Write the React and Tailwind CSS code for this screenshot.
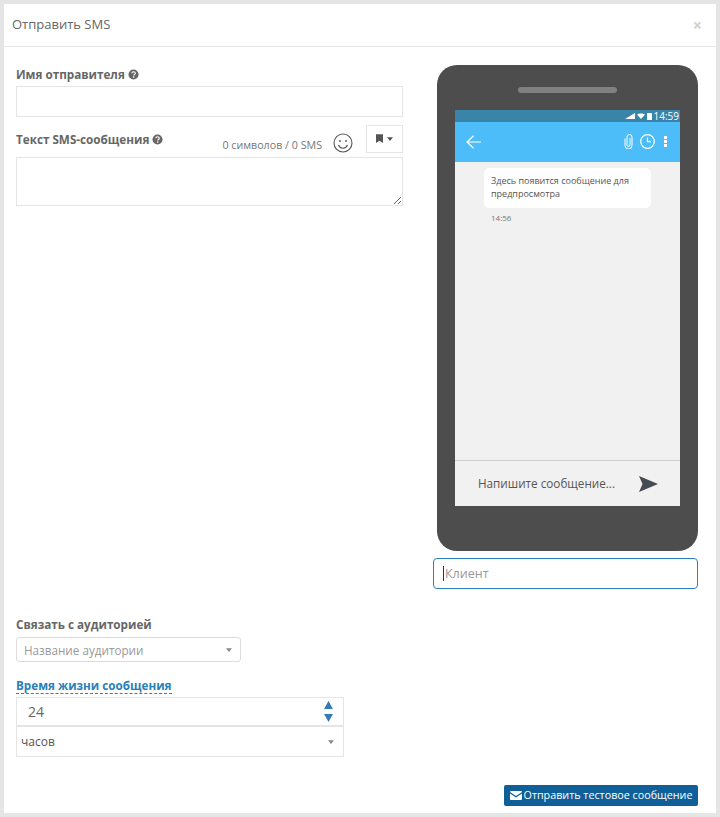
import { useState } from "react";

function HelpIcon() {
  return (
    <svg width="11" height="11" viewBox="0 0 12 12" className="inline-block ml-[3px] align-[-1px]">
      <circle cx="6" cy="6" r="5.5" fill="#666" />
      <path d="M4.1 4.7C4.2 3.6 5 3 6 3c1.1 0 1.9.6 1.9 1.6 0 1.5-1.6 1.4-1.6 2.6" fill="none" stroke="#fff" strokeWidth="1.3" />
      <rect x="5.4" y="8" width="1.5" height="1.5" fill="#fff" />
    </svg>
  );
}

function Caret({ color = "#888" }) {
  return (
    <svg width="6" height="4" viewBox="0 0 8 5">
      <path d="M0 0h8L4 5z" fill={color} />
    </svg>
  );
}

function PhonePreview() {
  return (
    <div className="w-[261px] h-[486px] ml-[4px] bg-[#4d4d4d] rounded-[20px] flex flex-col items-center pt-[22px]">
      <div className="w-[99px] h-[6px] rounded-full bg-[#808080]" />
      <div className="w-[225px] h-[396px] mt-[17px] bg-[#f1f1f1] flex flex-col">
        <div className="h-[12px] bg-[#3a84aa] flex items-center justify-end gap-[2px] pr-[1px] text-white text-[10px] leading-none">
          <svg width="10" height="6" viewBox="0 0 10 6"><path d="M0 6L10 0v6z" fill="#fff" /></svg>
          <svg width="8" height="6" viewBox="0 0 8 6"><path d="M0 1.500C2 0 6 0 8 1.500L4 6z" fill="#fff" /></svg>
          <svg width="5" height="7" viewBox="0 0 5 7"><rect width="5" height="7" rx="0.5" fill="#fff" /></svg>
          <span>14:59</span>
        </div>
        <div className="h-[40px] bg-[#4dbdf9] flex items-center pl-[11px] pr-[13px] pb-[1px]">
          <svg width="15" height="14" viewBox="0 0 15 14" fill="none" stroke="#fff" strokeWidth="1.2">
            <path d="M15 7H1M7.5 .8L1 7l6.500 6.200" />
          </svg>
          <div className="ml-auto flex items-center">
            <svg width="9" height="15" viewBox="0 0 9 15" fill="none" stroke="#fff" strokeWidth="1">
              <path d="M6 4v7a1.500 1.500 0 0 1-3 0V3a2.500 2.500 0 0 1 5 0v8.500a3.500 3.500 0 0 1-7 0V4.500" />
            </svg>
            <svg width="15" height="15" viewBox="0 0 15 15" fill="none" stroke="#fff" strokeWidth="1.2" className="ml-[7px]">
              <circle cx="7.500" cy="7.500" r="6.800" />
              <path d="M7.500 3.500v4.200h3.500" />
            </svg>
            <div className="ml-[9px] flex flex-col gap-[1px]">
              <div className="w-[3px] h-[3px] bg-white" />
              <div className="w-[3px] h-[3px] bg-white" />
              <div className="w-[3px] h-[3px] bg-white" />
            </div>
          </div>
        </div>
        <div className="flex-1 pt-[6px] pl-[29px]">
          <div className="w-[167px] h-[40px] bg-white rounded-[5px] pl-[7px] pt-[6px] text-[9px] leading-[13px] text-[#555]">
            Здесь появится сообщение для предпросмотра
          </div>
          <div className="mt-[4px] ml-[7px] text-[8px] leading-[11px] text-[#777]">14:56</div>
        </div>
        <div className="h-[46px] border-t border-[#cfcfcf] flex items-center pl-[23px] pr-[22px]">
          <span className="text-[11.700px] mt-[1px] text-[#555]">Напишите сообщение...</span>
          <svg width="19" height="16" viewBox="0 0 19 16" className="ml-auto">
            <path d="M0 0l19 8L0 16l3.500-8z" fill="#454b54" />
          </svg>
        </div>
      </div>
    </div>
  );
}

export default function App() {
  const [senderName, setSenderName] = useState("");
  const [smsText, setSmsText] = useState("");
  const [client, setClient] = useState("");

  return (
    <div className="w-[720px] h-[817px] bg-[#e5e5e5] p-[4px] font-['Open_Sans',sans-serif] text-[#666]">
      <div className="h-[809px] bg-white flex flex-col">
        <div className="h-[43px] shrink-0 border-b border-[#e5e5e5] flex items-center justify-between pl-[8px] pr-[14px]">
          <h4 className="text-[13px] text-[#666]">Отправить SMS</h4>
          <span className="text-[16px] font-bold leading-none text-[#d0d0d0]">×</span>
        </div>

        <div className="flex-1 flex pl-[12px] pr-[18px] pt-[18px] pb-[7px]">
          <div className="w-[387px] flex flex-col">
            <label className="text-[11.700px] font-bold leading-[18px] text-[#666]">
              Имя отправителя<HelpIcon />
            </label>
            <input
              className="mt-[3px] h-[31px] w-full border border-[#e5e5e5] outline-none"
              value={senderName}
              onChange={(e) => setSenderName(e.target.value)}
            />
            <div className="mt-[8px] h-[28px] flex items-start">
              <label className="text-[11.700px] font-bold leading-[20px] mt-[4px] text-[#666]">
                Текст SMS-сообщения<HelpIcon />
              </label>
              <span className="ml-auto mt-[12px] text-[10.700px] leading-[16px] text-[#777]">0 символов / 0 SMS</span>
              <svg width="20" height="20" viewBox="0 0 20 20" fill="none" stroke="#555" strokeWidth="1.1" className="ml-[11px] mt-[8px]">
                <circle cx="10" cy="10" r="9" />
                <circle cx="7" cy="8" r="0.9" fill="#555" stroke="none" />
                <circle cx="13" cy="8" r="0.9" fill="#555" stroke="none" />
                <path d="M5.500 12c1 2.300 2.700 3.200 4.500 3.200s3.500-.9 4.500-3.200" />
              </svg>
              <button className="ml-[13px] w-[37px] h-[28px] border border-[#e5e5e5] flex items-center justify-center gap-[4px] pb-[1px]">
                <svg width="7" height="9" viewBox="0 0 8 10"><path d="M0 0h8v10L4 7.500 0 10z" fill="#555" /></svg>
                <Caret color="#555" />
              </button>
            </div>
            <textarea
              className="mt-[4px] h-[49px] w-full border border-[#e5e5e5] outline-none resize-y block"
              value={smsText}
              onChange={(e) => setSmsText(e.target.value)}
            />

            <label className="mt-[408px] text-[11.700px] font-bold leading-[20px] text-[#666]">Связать с аудиторией</label>
            <div className="mt-[3px] w-[225px] h-[25px] border border-[#dcdcdc] rounded-[3px] flex items-center justify-between pl-[7px] pr-[8px]">
              <span className="text-[11.700px] mt-[2px] text-[#999]">Название аудитории</span>
              <Caret />
            </div>
            <div className="mt-[15px] self-start text-[11.700px] font-bold leading-[16px] text-[#2a80b9] border-b border-dashed border-[#2a80b9]">
              Время жизни сообщения
            </div>
            <div className="mt-[3px] w-[328px] h-[30px] border border-[#e5e5e5] border-b-2 flex items-center justify-between pl-[11px] pr-[10px]">
              <span className="text-[14px] text-[#666]">24</span>
              <div className="flex flex-col gap-[5px]">
                <svg width="9" height="8" viewBox="0 0 10 9"><path d="M5 0l5 9H0z" fill="#337ab7" /></svg>
                <svg width="9" height="8" viewBox="0 0 10 9"><path d="M0 0h10L5 9z" fill="#337ab7" /></svg>
              </div>
            </div>
            <div className="w-[328px] h-[30px] border border-t-0 border-[#e5e5e5] flex items-center justify-between pl-[4px] pr-[9px]">
              <span className="text-[12px] text-[#555]">часов</span>
              <Caret />
            </div>
          </div>

          <div className="ml-[30px] flex-1 flex flex-col">
            <PhonePreview />
            <div className="relative mt-[7px] w-[265px]">
              <input
                className="h-[31px] w-full border border-[#2a80b9] rounded-[4px] pl-[11px] pr-[10px] text-[12.500px] outline-none placeholder:text-[#999]"
                placeholder="Клиент"
                value={client}
                onChange={(e) => setClient(e.target.value)}
              />
              <div className="absolute left-[10px] top-[8px] w-px h-[15px] bg-[#333]" />
            </div>
            <button className="mt-auto self-end ml-auto w-[194px] h-[21px] bg-[#0f5f99] rounded-[2px] text-white text-[10.750px] flex items-center justify-center gap-[2px]">
              <svg width="12" height="9" viewBox="0 0 12 9"><path d="M0 1a1 1 0 0 1 1-1h10a1 1 0 0 1 1 1L6 5zM0 2.500L6 6.500l6-4V8a1 1 0 0 1-1 1H1a1 1 0 0 1-1-1z" fill="#fff" /></svg>
              Отправить тестовое сообщение
            </button>
          </div>
        </div>
      </div>
    </div>
  );
}
